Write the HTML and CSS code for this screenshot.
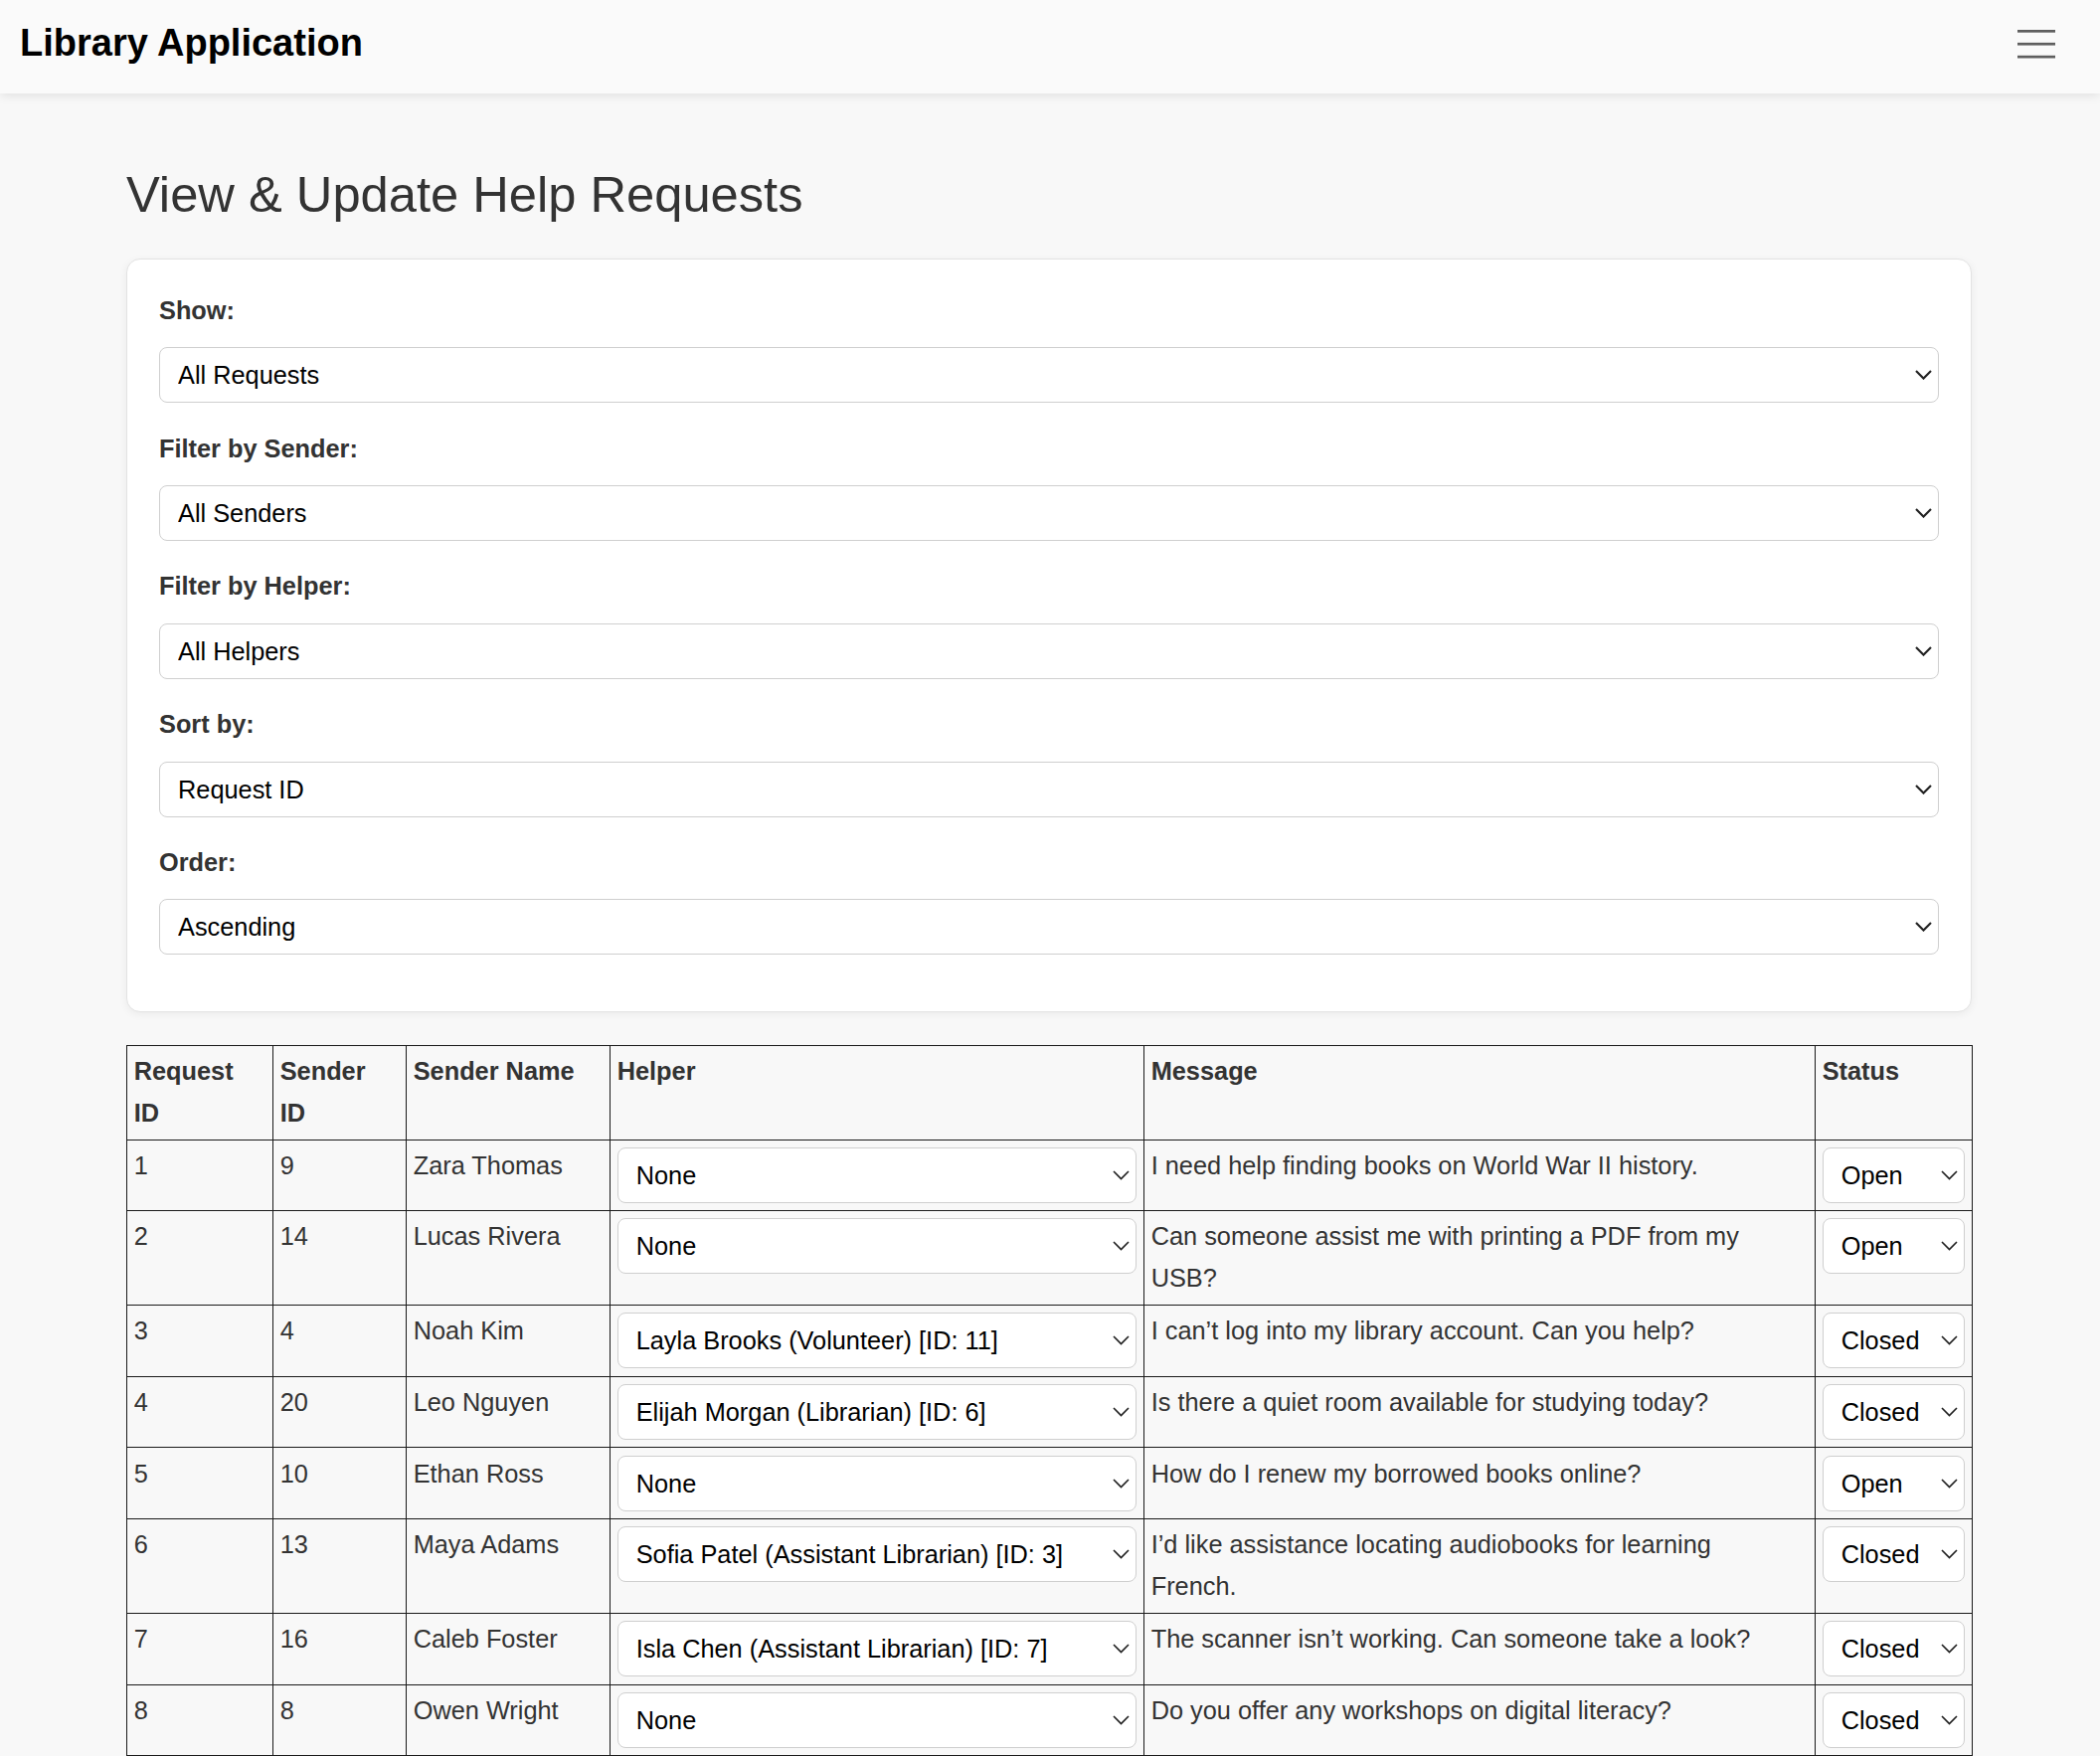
FILE: index.html
```html
<!DOCTYPE html>
<html lang="en">
<head>
<meta charset="utf-8">
<title>Library Application</title>
<link rel="stylesheet" href="styles.css">
</head>
<body>
<header class="topbar">
  <div class="brand">Library Application</div>
  <button class="menu-btn" type="button" aria-label="Menu">
    <svg width="38" height="29" viewBox="0 0 38 29"><rect x="0" y="0" width="38" height="2.7" fill="#5f5f5f"/><rect x="0" y="12.9" width="38" height="2.7" fill="#5f5f5f"/><rect x="0" y="25.8" width="38" height="2.7" fill="#5f5f5f"/></svg>
  </button>
</header>
<main class="page">
  <h1 class="page-title">View &amp; Update Help Requests</h1>
  <section class="filters">
    <div class="field">
      <label class="field-label">Show:</label>
      <div class="select-wrap"><select class="select"><option>All Requests</option></select><svg class="chev chev-bold" width="17" height="10" viewBox="0 0 17 10"><polyline points="1,1 8.5,8.6 16,1"/></svg></div>
    </div>
    <div class="field">
      <label class="field-label">Filter by Sender:</label>
      <div class="select-wrap"><select class="select"><option>All Senders</option></select><svg class="chev chev-bold" width="17" height="10" viewBox="0 0 17 10"><polyline points="1,1 8.5,8.6 16,1"/></svg></div>
    </div>
    <div class="field">
      <label class="field-label">Filter by Helper:</label>
      <div class="select-wrap"><select class="select"><option>All Helpers</option></select><svg class="chev chev-bold" width="17" height="10" viewBox="0 0 17 10"><polyline points="1,1 8.5,8.6 16,1"/></svg></div>
    </div>
    <div class="field">
      <label class="field-label">Sort by:</label>
      <div class="select-wrap"><select class="select"><option>Request ID</option></select><svg class="chev chev-bold" width="17" height="10" viewBox="0 0 17 10"><polyline points="1,1 8.5,8.6 16,1"/></svg></div>
    </div>
    <div class="field">
      <label class="field-label">Order:</label>
      <div class="select-wrap"><select class="select"><option>Ascending</option></select><svg class="chev chev-bold" width="17" height="10" viewBox="0 0 17 10"><polyline points="1,1 8.5,8.6 16,1"/></svg></div>
    </div>
  </section>

  <table class="requests">
    <colgroup>
      <col class="c-id">
      <col class="c-sid">
      <col class="c-name">
      <col class="c-helper">
      <col class="c-msg">
      <col class="c-status">
    </colgroup>
    <thead>
      <tr>
        <th>Request ID</th>
        <th>Sender ID</th>
        <th>Sender Name</th>
        <th>Helper</th>
        <th>Message</th>
        <th>Status</th>
      </tr>
    </thead>
    <tbody>
      <tr>
        <td>1</td><td>9</td><td>Zara Thomas</td>
        <td><div class="select-wrap cell-select"><select class="select"><option>None</option></select><svg class="chev chev-thin" width="17" height="10" viewBox="0 0 17 10"><polyline points="1,1 8.5,8.6 16,1"/></svg></div></td>
        <td class="msg">I need help finding books on World War II history.</td>
        <td><div class="select-wrap cell-select"><select class="select"><option>Open</option></select><svg class="chev chev-thin" width="17" height="10" viewBox="0 0 17 10"><polyline points="1,1 8.5,8.6 16,1"/></svg></div></td>
      </tr>
      <tr>
        <td>2</td><td>14</td><td>Lucas Rivera</td>
        <td><div class="select-wrap cell-select"><select class="select"><option>None</option></select><svg class="chev chev-thin" width="17" height="10" viewBox="0 0 17 10"><polyline points="1,1 8.5,8.6 16,1"/></svg></div></td>
        <td class="msg">Can someone assist me with printing a PDF from my USB?</td>
        <td><div class="select-wrap cell-select"><select class="select"><option>Open</option></select><svg class="chev chev-thin" width="17" height="10" viewBox="0 0 17 10"><polyline points="1,1 8.5,8.6 16,1"/></svg></div></td>
      </tr>
      <tr>
        <td>3</td><td>4</td><td>Noah Kim</td>
        <td><div class="select-wrap cell-select"><select class="select"><option>Layla Brooks (Volunteer) [ID: 11]</option></select><svg class="chev chev-thin" width="17" height="10" viewBox="0 0 17 10"><polyline points="1,1 8.5,8.6 16,1"/></svg></div></td>
        <td class="msg">I can’t log into my library account. Can you help?</td>
        <td><div class="select-wrap cell-select"><select class="select"><option>Closed</option></select><svg class="chev chev-thin" width="17" height="10" viewBox="0 0 17 10"><polyline points="1,1 8.5,8.6 16,1"/></svg></div></td>
      </tr>
      <tr>
        <td>4</td><td>20</td><td>Leo Nguyen</td>
        <td><div class="select-wrap cell-select"><select class="select"><option>Elijah Morgan (Librarian) [ID: 6]</option></select><svg class="chev chev-thin" width="17" height="10" viewBox="0 0 17 10"><polyline points="1,1 8.5,8.6 16,1"/></svg></div></td>
        <td class="msg">Is there a quiet room available for studying today?</td>
        <td><div class="select-wrap cell-select"><select class="select"><option>Closed</option></select><svg class="chev chev-thin" width="17" height="10" viewBox="0 0 17 10"><polyline points="1,1 8.5,8.6 16,1"/></svg></div></td>
      </tr>
      <tr>
        <td>5</td><td>10</td><td>Ethan Ross</td>
        <td><div class="select-wrap cell-select"><select class="select"><option>None</option></select><svg class="chev chev-thin" width="17" height="10" viewBox="0 0 17 10"><polyline points="1,1 8.5,8.6 16,1"/></svg></div></td>
        <td class="msg">How do I renew my borrowed books online?</td>
        <td><div class="select-wrap cell-select"><select class="select"><option>Open</option></select><svg class="chev chev-thin" width="17" height="10" viewBox="0 0 17 10"><polyline points="1,1 8.5,8.6 16,1"/></svg></div></td>
      </tr>
      <tr>
        <td>6</td><td>13</td><td>Maya Adams</td>
        <td><div class="select-wrap cell-select"><select class="select"><option>Sofia Patel (Assistant Librarian) [ID: 3]</option></select><svg class="chev chev-thin" width="17" height="10" viewBox="0 0 17 10"><polyline points="1,1 8.5,8.6 16,1"/></svg></div></td>
        <td class="msg">I’d like assistance locating audiobooks for learning French.</td>
        <td><div class="select-wrap cell-select"><select class="select"><option>Closed</option></select><svg class="chev chev-thin" width="17" height="10" viewBox="0 0 17 10"><polyline points="1,1 8.5,8.6 16,1"/></svg></div></td>
      </tr>
      <tr>
        <td>7</td><td>16</td><td>Caleb Foster</td>
        <td><div class="select-wrap cell-select"><select class="select"><option>Isla Chen (Assistant Librarian) [ID: 7]</option></select><svg class="chev chev-thin" width="17" height="10" viewBox="0 0 17 10"><polyline points="1,1 8.5,8.6 16,1"/></svg></div></td>
        <td class="msg">The scanner isn’t working. Can someone take a look?</td>
        <td><div class="select-wrap cell-select"><select class="select"><option>Closed</option></select><svg class="chev chev-thin" width="17" height="10" viewBox="0 0 17 10"><polyline points="1,1 8.5,8.6 16,1"/></svg></div></td>
      </tr>
      <tr>
        <td>8</td><td>8</td><td>Owen Wright</td>
        <td><div class="select-wrap cell-select"><select class="select"><option>None</option></select><svg class="chev chev-thin" width="17" height="10" viewBox="0 0 17 10"><polyline points="1,1 8.5,8.6 16,1"/></svg></div></td>
        <td class="msg">Do you offer any workshops on digital literacy?</td>
        <td><div class="select-wrap cell-select"><select class="select"><option>Closed</option></select><svg class="chev chev-thin" width="17" height="10" viewBox="0 0 17 10"><polyline points="1,1 8.5,8.6 16,1"/></svg></div></td>
      </tr>
    </tbody>
  </table>
</main>
</body>
</html>
```

FILE: styles.css
```css
html, body {
  margin: 0;
  padding: 0;
}

body {
  background: #f8f8f8;
  font-family: "Liberation Sans", Arial, Helvetica, sans-serif;
  font-size: 25.33px;
  color: #333;
}

.topbar {
  height: 94px;
  box-sizing: border-box;
  background: #fafafa;
  box-shadow: 0 2px 10px rgba(0, 0, 0, 0.1);
  display: flex;
  justify-content: space-between;
  align-items: flex-start;
  padding: 0 45px 0 20px;
}

.brand {
  margin-top: 22px;
  font-size: 38px;
  font-weight: bold;
  color: #000;
  line-height: normal;
}

.menu-btn {
  margin-top: 29.5px;
  padding: 0;
  border: 0;
  background: none;
  line-height: 0;
  cursor: pointer;
}

.page {
  width: 1856px;
  margin-left: 127px;
  padding-top: 71.5px;
}

.page-title {
  margin: 0 0 33.7px;
  font-size: 50.67px;
  font-weight: normal;
  line-height: 60.8px;
  color: #333;
}

.filters {
  background: #fff;
  border: 1px solid #e3e3e3;
  border-radius: 14px;
  padding: 30.8px 32px;
  box-shadow: 0 2px 8px rgba(0, 0, 0, 0.06);
  margin-bottom: 33px;
}

.field-label {
  display: block;
  font-weight: bold;
  line-height: 41.7px;
  margin-bottom: 15.8px;
  color: #333;
}

.select-wrap {
  position: relative;
  margin-bottom: 25.3px;
}

.select {
  -webkit-appearance: none;
  appearance: none;
  display: block;
  width: 100%;
  height: 56px;
  box-sizing: border-box;
  border: 1px solid #cfcfcf;
  border-radius: 8px;
  background: #fff;
  font-family: inherit;
  font-size: 25.33px;
  color: #000;
  padding: 0 34px 0 18px;
  margin: 0;
  outline: none;
}

.chev {
  position: absolute;
  right: 7px;
  top: 50%;
  margin-top: -5px;
  fill: none;
  pointer-events: none;
}

.chev-bold polyline {
  stroke: #222;
  stroke-width: 2.1;
}

.chev-thin polyline {
  stroke: #1f1f1f;
  stroke-width: 1.6;
}

.requests {
  width: 1856px;
  border-collapse: collapse;
  table-layout: fixed;
}

.requests th,
.requests td {
  border: 1px solid #1a1a1a;
  padding: 5.3px 6.7px;
  vertical-align: top;
  text-align: left;
  line-height: 41.7px;
  color: #333;
}

.requests th {
  font-weight: bold;
  padding-right: 10px;
}

.requests td.msg {
  padding-right: 17px;
}

.c-id { width: 147px; }
.c-sid { width: 134px; }
.c-name { width: 205px; }
.c-helper { width: 537px; }
.c-msg { width: 675px; }
.c-status { width: 158px; }

.cell-select {
  margin: 2px 0;
}
```
